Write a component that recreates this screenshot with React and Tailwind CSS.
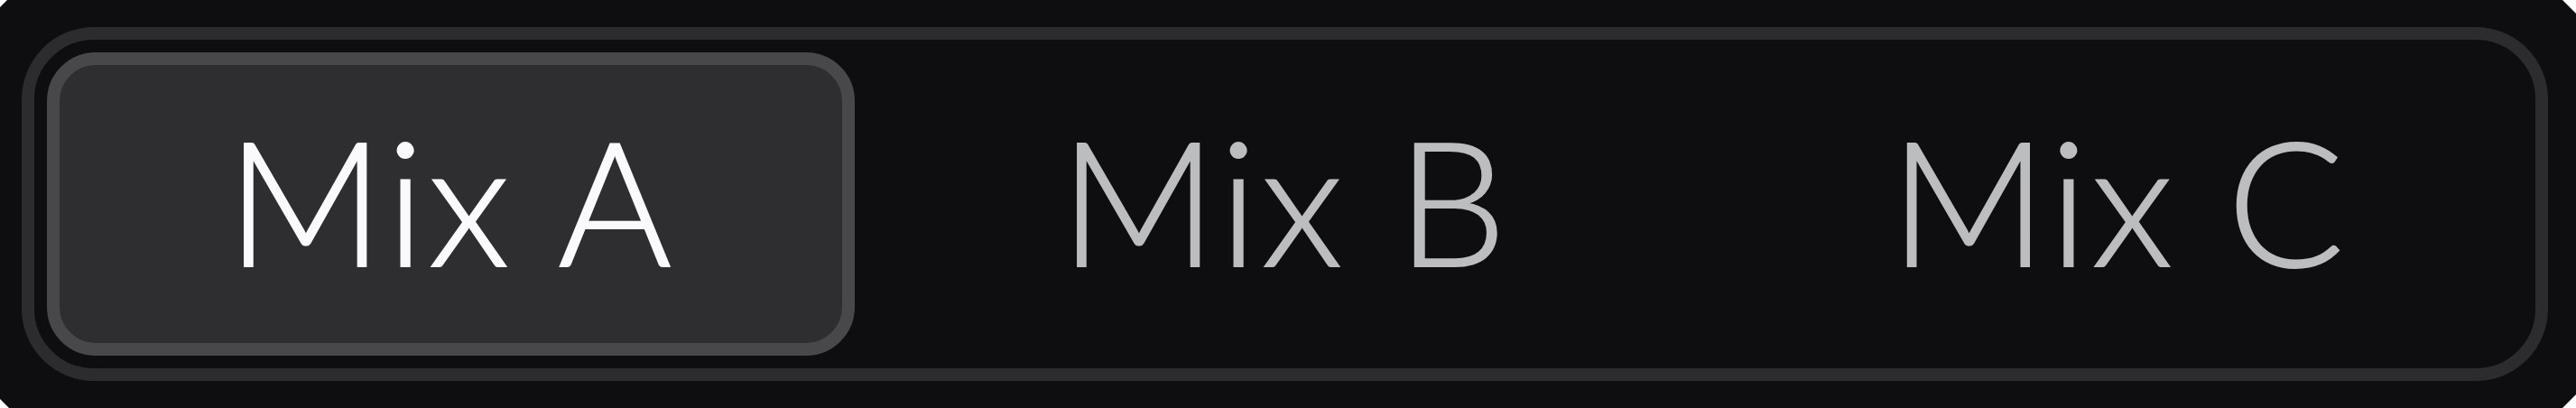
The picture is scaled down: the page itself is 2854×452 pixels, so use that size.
import { useState } from 'react';

const mixes = ['Mix A', 'Mix B', 'Mix C'];

export default function App() {
  const [active, setActive] = useState('Mix A');

  return (
    <div className="h-[452px] w-full bg-white">
      <div className="h-full bg-[#0e0e10] pl-[24px] pr-[31px] py-[30px] [clip-path:polygon(8px_0,calc(100%-15px)_0,100%_15px,100%_calc(100%-15px),calc(100%-15px)_100%,10px_100%,0_calc(100%-10px),0_8px)]">
        <div className="h-full rounded-[80px] border-[14px] border-[#2c2c2e] p-[14px] grid grid-cols-3 gap-[29px]">
          {mixes.map(m => (
            <button
              key={m}
              onClick={() => setActive(m)}
              className={
                m === active
                  ? 'flex items-center justify-center rounded-[54px] border-[14px] border-[#48484a] bg-[#2e2e30] text-[#fafafc]'
                  : 'flex items-center justify-center rounded-[54px] border-[14px] border-transparent text-[#bcbdbf]'
              }
            >
              <span className="font-['Lato',sans-serif] font-light text-[192px] leading-none tracking-[4px] -translate-y-[5px] [-webkit-text-stroke:2px_currentcolor]">{m}</span>
            </button>
          ))}
        </div>
      </div>
    </div>
  );
}
